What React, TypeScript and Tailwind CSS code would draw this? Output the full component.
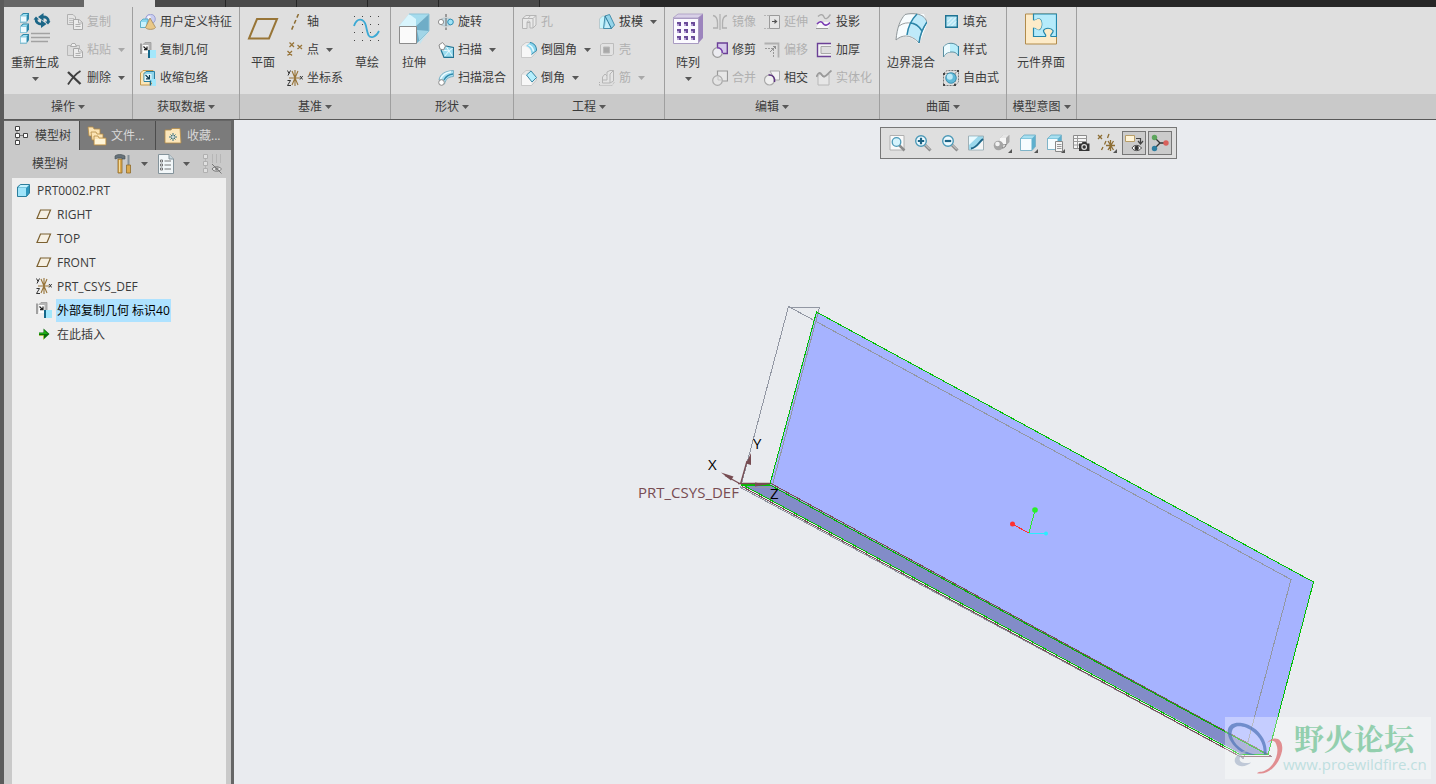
import React from "react";

type IconProps = { children: React.ReactNode; size?: "sm" | "lg" };

function Svg({ children, size = "sm" }: IconProps) {
  return size === "lg" ? (
    <svg viewBox="0 0 32 32" className="h-8 w-8 shrink-0" fill="none" aria-hidden="true">{children}</svg>
  ) : (
    <svg viewBox="0 0 16 16" className="h-4 w-4 shrink-0" fill="none" aria-hidden="true">{children}</svg>
  );
}

function Caret({ dim = false }: { dim?: boolean }) {
  return (
    <svg viewBox="0 0 7 4" className="h-1 w-[7px] shrink-0" aria-hidden="true">
      <path d="M0 0H7L3.5 4Z" fill={dim ? "#a8a8a8" : "#585858"} />
    </svg>
  );
}

function MiniCube({ y }: { y: number }) {
  return (
    <g transform={`translate(1 ${y})`}>
      <path d="M0 3L3 0H9V6L6.500 9.500H0Z" fill="#2d86a8" />
      <path d="M1 3L3.500 1H8L6 3Z" fill="#9be2f5" />
      <path d="M0.500 3H6.500V9H0.500Z" fill="#eefaff" stroke="#8fc9dc" />
    </g>
  );
}

const icons = {
  regen: (
    <Svg size="lg">
      <MiniCube y={0} />
      <MiniCube y={10.5} />
      <MiniCube y={21} />
      <path d="M23 4C27.500 3.500 29.500 5.500 29.500 9" stroke="#1c6687" strokeWidth="2.800" />
      <path d="M24.500 0V8L19 4Z" fill="#1c6687" />
      <path d="M26 8.500H31.500L29 11.500Z" fill="#1c6687" />
      <path d="M24 11C18.500 11.500 17 9 17 6" stroke="#1c6687" strokeWidth="2.800" />
      <path d="M22 7V15L27.500 11Z" fill="#1c6687" />
      <path d="M14.500 6.500H20L17 3.500Z" fill="#1c6687" />
      <path d="M12 20.500H31M12 24.500H31M12 28.500H29" stroke="#a2a2a2" strokeWidth="1.500" />
    </Svg>
  ),
  copy: (
    <Svg>
      <path d="M0.500 0.500H6L8.500 3V10.500H0.500Z" fill="#e4e4e4" stroke="#b0b0b0" />
      <path d="M2 4.500H7M2 6.500H6M2 8.500H6" stroke="#c0c0c0" />
      <path d="M6.500 5.500H12L15.500 8.500V15.500H6.500Z" fill="#ececec" stroke="#a8a8a8" />
      <path d="M11.500 5.500V9H15M8.500 10.500H13.500M8.500 12.500H13.500" stroke="#b0b0b0" />
    </Svg>
  ),
  paste: (
    <Svg>
      <path d="M0.500 3.500H12.500V13.500H0.500Z" fill="#dcdcdc" stroke="#b8b8b8" />
      <path d="M3.500 4.500L5 1.500H8L9.500 4.500Z" fill="#f0f0f0" stroke="#acacac" />
      <path d="M6.500 6.500H12L15.500 9.500V15.500H6.500Z" fill="#ececec" stroke="#a8a8a8" />
      <path d="M11.500 6.500V10H15M8.500 11.500H13.500M8.500 13.500H13.500" stroke="#b0b0b0" />
    </Svg>
  ),
  remove: (
    <Svg>
      <path d="M1 2L13.500 14" stroke="#3f3f3f" strokeWidth="2.400" />
      <path d="M13.500 1C8.500 4 4.500 9 1 14.500" stroke="#3f3f3f" strokeWidth="1.800" />
    </Svg>
  ),
  udf: (
    <Svg>
      <circle cx="10.500" cy="5" r="4.800" fill="#c9cdf0" stroke="#8f94cd" strokeWidth="0.800" />
      <circle cx="9" cy="3.500" r="1.800" fill="#f3f4ff" />
      <path d="M0.500 7.500L3 5H8V12L6.500 13.500H0.500Z" fill="#8ad8ef" stroke="#4ba3bf" strokeWidth="0.800" />
      <path d="M1 8H6V13H1Z" fill="#c9f2fd" />
      <path d="M10 4L15.500 13.500C14 16 7 16 5.500 13.500Z" fill="#e9c887" stroke="#a3885a" strokeWidth="0.800" />
    </Svg>
  ),
  copyGeom: (
    <Svg>
      <path d="M1 1.500V12" stroke="#555" />
      <path d="M3 2.500L5 0.500H11V8L8.500 10.500H3Z" fill="#b5b5b5" stroke="#999" strokeWidth="0.800" />
      <path d="M2.500 3H8.500V11H2.500Z" fill="#fdfdfd" />
      <path d="M3.500 4.500L6.500 7.500M7 4.500V7.700H4" stroke="#222" strokeWidth="1.200" />
      <path d="M8 8H10V16H8Z" fill="#15688a" />
      <path d="M10 8H16V16H10Z" fill="#a3e7fb" />
    </Svg>
  ),
  shrink: (
    <Svg>
      <path d="M0.500 3L3 0.500H13V12L10 15H0.500Z" fill="#fbe6b8" stroke="#c49a4d" />
      <path d="M4 3.500L6 1.500H14.500V9L12 11.500H4Z" fill="#8fd4ea" stroke="#2a7fa2" />
      <path d="M4.500 4H11.500V11H4.500Z" fill="#e2f8fe" />
      <path d="M5.500 5L9 8.500M9.500 5V8.800H6" stroke="#123d52" strokeWidth="1.200" />
      <path d="M10 9H16V16H12V12H10Z" fill="#a3e7fb" />
      <path d="M10.500 10.500V15.500" stroke="#15688a" strokeWidth="1.500" />
    </Svg>
  ),
  plane: (
    <Svg size="lg">
      <path d="M10 6H30L22 25.500H2Z" stroke="#987537" strokeWidth="2" />
    </Svg>
  ),
  axis: (
    <Svg>
      <path d="M11.500 0L4.500 16" stroke="#8d6d33" strokeWidth="1.500" strokeDasharray="4 2.500" />
    </Svg>
  ),
  point: (
    <Svg>
      <path d="M2.500 0.500L7 5M7 0.500L2.500 5M10.500 3L15 7M15 3L10.500 7M0.500 9L5 13.500M5 9L0.500 13.500" stroke="#98753a" strokeWidth="1.300" />
    </Svg>
  ),
  csys: (
    <Svg>
      <path d="M8 0V16M2 8H13M5 1L11 15M11 1L5 15" stroke="#98753a" strokeWidth="1.100" />
      <path d="M0.500 0.500L2 3.500M3.500 0.500L1 5.500M0.500 10.500H3.500L0.500 15.500H4M13 6L15.700 9.500M15.700 6L13 9.500" stroke="#333" />
    </Svg>
  ),
  sketch: (
    <Svg size="lg">
      <g fill="#444" shapeRendering="crispEdges">
        {[1, 9, 17, 25].map((x) =>
          [3, 11, 19, 27].map((y) => <rect key={`${x}-${y}`} x={x + 2} y={y} width="1" height="1" />)
        )}
      </g>
      <path d="M3 13C6 4 13 5 15 13C17 23 18 25 22 24C25 23 27 20 28 18" stroke="#3ba9d4" strokeWidth="1.800" />
    </Svg>
  ),
  extrude: (
    <Svg size="lg">
      <path d="M1 13L11 1H31L18 13Z" fill="#a5dcee" />
      <path d="M18 13L31 1V18L18 31Z" fill="#6fadc7" />
      <path d="M22 31L31 18L19 17Z" fill="#b6e6f5" opacity="0.700" />
      <path d="M1 13L11 1L18 6L18 13Z" fill="#d9f5fd" />
      <path d="M11 1H31V18L18 31" stroke="#8fc3d6" />
      <path d="M1.500 13.500H18.500V30.500H1.500Z" fill="#fafafa" stroke="#8b8b8b" />
    </Svg>
  ),
  revolve: (
    <Svg>
      <path d="M8 0V16" stroke="#555" strokeDasharray="3 1.500" />
      <path d="M3 5C6 3.500 10 3.500 13 5L13 11C10 12.500 6 12.500 3 11Z" fill="#c5dce5" stroke="#a9b9c0" strokeWidth="0.600" />
      <circle cx="3" cy="8" r="2.600" fill="#fff" stroke="#8f8f8f" />
      <circle cx="12.500" cy="8" r="2.800" fill="#9fe2f6" stroke="#2e8fb5" />
      <path d="M8 4V12" stroke="#666" />
    </Svg>
  ),
  sweep: (
    <Svg>
      <path d="M3 5L8 4L15.500 5.500V15H6L3 9Z" fill="#9bdcef" />
      <path d="M8 4L11 9L15.500 5.500M11 9L15 15M11 9L6 15M11 9L4 8" stroke="#e9faff" />
      <path d="M3 8L6 15.300H15.500V5.500L8 4" stroke="#227392" strokeWidth="1.200" />
      <path d="M1 3L4.500 0.500L7.500 4L5.500 8L2 7Z" fill="#fff" stroke="#8a8a8a" />
    </Svg>
  ),
  sweepBlend: (
    <Svg>
      <path d="M1 10C2 4 7 1 15.500 0.500V6.500C10 7 8 9 6.500 14Z" fill="#a9dff0" stroke="#6aa6bc" strokeWidth="0.800" />
      <path d="M2.500 9C4.500 4.500 8 2.500 13 1.800" stroke="#effbff" strokeWidth="1.500" />
      <path d="M6 10C8 6 10 4.500 15 4" stroke="#2f89ab" strokeWidth="1.300" />
      <circle cx="3.500" cy="12.500" r="2.800" fill="#fff" stroke="#8a8a8a" />
    </Svg>
  ),
  hole: (
    <Svg>
      <path d="M1.500 4.500L5 1.500H15V11L12 14H9V8.500H6V14.500H1.500Z" fill="#e9e9e9" stroke="#b5b5b5" />
      <path d="M1.500 4.500H12V14M12 4.500L15 1.500M6 8.500C6 6.500 9 6.500 9 8.500M7 4.500L9.500 1.500" stroke="#b5b5b5" />
    </Svg>
  ),
  round: (
    <Svg>
      <path d="M0.500 4L5 0.500H9C13 1 15.500 4 15.500 8.500V10L10.500 15.500H0.500Z" fill="#ededed" stroke="#bdbdbd" strokeWidth="0.700" />
      <path d="M5 4L9 0.500C13 1 15.500 4 15.500 8.500L10.500 12.500C10.500 8 8.500 5 5 4Z" fill="#8ad5ee" />
      <path d="M9 0.500C13 1 15.500 4 15.500 8.500L10.500 12.500" stroke="#2d86a8" />
      <path d="M7.500 3C10.500 4 12 6 12.500 9.500" stroke="#e6fbff" strokeWidth="1.600" />
      <path d="M1 4.500H4C8 5.500 10 8.500 10 12V15H1Z" fill="#f7f7f7" />
    </Svg>
  ),
  chamfer: (
    <Svg>
      <path d="M0.500 4.500L5 0.500H10L15.500 8V10L10.500 15.500H0.500Z" fill="#e6e6e6" stroke="#bdbdbd" strokeWidth="0.700" />
      <path d="M1 5H5L10.500 12V15H1Z" fill="#f7f7f7" />
      <path d="M5.500 5L10 1L15.500 7.500L11 12Z" fill="#b6effd" stroke="#3b8ba8" />
    </Svg>
  ),
  draft: (
    <Svg>
      <path d="M0.500 5L3.500 2H7V12L4 14.500H0.500Z" fill="#c9f4fc" stroke="#a5b5ba" strokeWidth="0.600" />
      <path d="M6 2L10.500 0.500L15.500 11L12.500 14.500H4.500Z" fill="#95d5ea" stroke="#3a86a4" strokeWidth="0.900" />
      <path d="M6 2L12.500 14.500" stroke="#2b7695" />
      <path d="M7.500 6L5.500 14H11Z" fill="#c5edf8" />
    </Svg>
  ),
  shell: (
    <Svg>
      <path d="M1.500 3L3 1.500H14.500V12L13 13.500H1.500Z" fill="#e2e2e2" stroke="#bdbdbd" />
      <path d="M4.500 5H10.500V11H4.500Z" fill="#a9a9a9" stroke="#b9b9b9" />
    </Svg>
  ),
  rib: (
    <Svg>
      <path d="M3.500 7L6 4L8 6V2L11 0.500H14.500V11L11 13H3.500Z" fill="#e4e4e4" stroke="#b5b5b5" />
      <path d="M11 4V13M8 6V10H4M11 4L14.500 0.500" stroke="#b5b5b5" />
      <path d="M0.500 15.500H13L15.500 12M0.500 15V11" stroke="#b0b0b0" strokeDasharray="1 1" />
    </Svg>
  ),
  pattern: (
    <Svg size="lg">
      <path d="M1 5L6 1H31L26 5Z" fill="#d8d0e7" stroke="#a99bc2" strokeWidth="0.800" />
      <path d="M26 5L31 1V25L26 30.500Z" fill="#9c84bd" />
      <path d="M1.500 5.500H26.500V30.500H1.500Z" fill="#fbfaff" stroke="#a99bc2" />
      <g fill="#6b4c9a" shapeRendering="crispEdges">
        {[5, 12, 19].map((x) =>
          [9, 16, 23].map((y) => <rect key={`${x}-${y}`} x={x} y={y} width="4" height="4" />)
        )}
      </g>
      <g fill="#b7a3d6" shapeRendering="crispEdges">
        {[5, 12, 19].map((x) =>
          [9, 16, 23].map((y) => <rect key={`${x}-${y}`} x={x} y={y + 2} width="2" height="2" />)
        )}
      </g>
    </Svg>
  ),
  mirror: (
    <Svg>
      <path d="M8 0V16" stroke="#a5a5a5" />
      <path d="M1 1.500C4 2 5.500 5 5.500 9V14H1M15 1.500C12 2 10.500 5 10.500 9V14H15" stroke="#b0b0b0" strokeWidth="1.300" />
    </Svg>
  ),
  trim: (
    <Svg>
      <path d="M5.500 1H15.300V11.500H10C9.500 8 8 6 5.500 5.500Z" fill="#d5c9ea" />
      <circle cx="5.500" cy="10.500" r="4.800" fill="#ebebf0" stroke="#999" strokeWidth="1.200" />
      <path d="M5.500 5V1H15.300V11.500H11" stroke="#6b4096" strokeWidth="1.400" />
      <path d="M5 5.700C8.500 5.500 10.500 8 10.300 11" stroke="#7a3cb3" strokeWidth="1.400" />
    </Svg>
  ),
  merge: (
    <Svg>
      <path d="M5.500 5V1H15.500V11H10.500" fill="#e7e7e7" stroke="#999" strokeWidth="1.200" />
      <circle cx="5.500" cy="10.500" r="4.800" fill="#e4e4e4" stroke="#aaa" strokeWidth="1.200" />
      <path d="M6 6.500V10H10" stroke="#c3c3c3" />
    </Svg>
  ),
  extend: (
    <Svg>
      <path d="M0 1.500H6M0 14.500H6" stroke="#b5b5b5" strokeDasharray="2 1" />
      <path d="M5.500 1.500H15.500V14.500H5.500Z" fill="#e6e6e6" stroke="#9b9b9b" />
      <path d="M8 7.500H11" stroke="#555" />
      <path d="M10.500 5L13.500 7.500L10.500 10Z" fill="#555" />
    </Svg>
  ),
  offset: (
    <Svg>
      <path d="M0.500 1.500H14.500V15.500" stroke="#b0b0b0" strokeWidth="1.800" />
      <path d="M1 6.500H9.500V15.500" stroke="#999" strokeDasharray="2 1" />
      <path d="M6 10L12 4M12 4.500H9M11.500 4V7" stroke="#8f8f8f" />
    </Svg>
  ),
  intersect: (
    <Svg>
      <path d="M6 1H15.500V10H11Z" fill="#f2f2f2" stroke="#aaa" />
      <circle cx="5.500" cy="10" r="5" fill="#f0f0f0" stroke="#a9a9a9" strokeWidth="1.200" />
      <path d="M4.500 5C9 4.500 11 7.500 10.500 12" stroke="#5e3580" strokeWidth="1.600" />
    </Svg>
  ),
  project: (
    <Svg>
      <path d="M2 2.500C5 -0.500 7 0.500 8 3C9 5.500 11 5.500 14.500 0.500" stroke="#a9a9a9" strokeWidth="1.400" />
      <path d="M0.500 14L3 8H15L12 14Z" fill="#f8f8f8" />
      <path d="M1 10C4 6.500 6 7.500 7.500 10C9 12 12 11 14 8.500" stroke="#7a3cb3" strokeWidth="1.600" />
      <path d="M0 14.500H12" stroke="#999" />
    </Svg>
  ),
  thicken: (
    <Svg>
      <path d="M15 1.500H1.500V14.500H15V11.500H5V4.500H15Z" fill="#f2f2f2" />
      <path d="M15 1.500H1.500V14.500H15" stroke="#6b4096" strokeWidth="1.400" />
      <path d="M15 4.500H5V11.500H15" stroke="#a9a9a9" />
    </Svg>
  ),
  solidify: (
    <Svg>
      <path d="M2 6V15H13V4C9 6 9 9 6 6C5 4 3 4 2 6Z" fill="#e6e6e6" stroke="#b8b8b8" />
      <path d="M0.500 7C2 2 4 2 6 5C8.500 9 11 4 15.500 0.500" stroke="#999" strokeWidth="1.700" />
    </Svg>
  ),
  boundary: (
    <Svg size="lg">
      <path d="M10 1H29L32 11L24 31C18 24 8 21 1 27C2 14 5 6 10 1Z" fill="#f7fcfe" />
      <path d="M22 1C27 1 31 5 32 9C28 16 25 22 24 30C20 25 17 23 12 22C13 14 16 7 22 1Z" fill="#bfeafa" />
      <path d="M10 1.500C5 7 2 15 1 27C9 20 18 23 24 30C25 22 28 15 32 9C30 4 27 2 22 1C18 0.500 14 0.500 10 1.500Z" stroke="#8f9699" />
      <path d="M4 13C12 7 22 10 27 18" stroke="#9aa0a2" />
      <path d="M22 1C16 7 13 14 12 22" stroke="#2b86aa" strokeWidth="1.500" />
      <path d="M32 9C28 15 25 22 24 30M15 10C20 10 24 13 27 18" stroke="#2b86aa" strokeWidth="1.500" />
    </Svg>
  ),
  fill: (
    <Svg>
      <path d="M2.700 1.700H14.300V13.300H2.700Z" fill="#b5e6f5" stroke="#1f7393" strokeWidth="1.400" />
      <path d="M4.500 8L9 3.500M4.500 12L13 3.500M8.500 12L13 7.500" stroke="#f3fcff" strokeWidth="0.900" />
    </Svg>
  ),
  style: (
    <Svg>
      <path d="M0.500 5C4 0 12 0 15.500 5V14C13 10 11 10 8 10C5 10 3 11 0.500 15Z" fill="#b9eefb" stroke="#5b8ea0" />
      <path d="M1 5C3 2.500 5 2 7 2V10C4 10 2.500 11 1 14Z" fill="#ecfbff" />
      <path d="M15.500 4V14" stroke="#3385a5" strokeWidth="1.200" />
    </Svg>
  ),
  freestyle: (
    <Svg>
      <path d="M0.500 3.500L4 0.500H15.500V12L12 15.500H0.500ZM0.500 3.500H12V15.500M12 3.500L15.500 0.500" stroke="#777" strokeDasharray="2 1" />
      <circle cx="8" cy="8" r="5.300" fill="#5fb9d8" stroke="#2c84a6" strokeWidth="0.800" />
      <circle cx="6.800" cy="6.800" r="3" fill="#bdeaf8" />
      <path d="M0 3H2V5H0ZM0 14H2V16H0ZM14 0H16V2H14ZM11 14H13V16H11Z" fill="#444" />
    </Svg>
  ),
  interfaceIcon: (
    <Svg size="lg">
      <path d="M0.500 1H31.500V31H0.500Z" fill="#fdebc8" stroke="#b18b4b" />
      <path d="M8.500 1H31.500V23.500H26C24.500 21.500 29 20 28 17.500C26 14.500 20 14.500 18.500 17.500C18 20 22 21.500 20.500 23.500H8.500V15C10.500 13.500 12 17.500 14.500 16.500C17.500 14.500 17.500 7.500 14.500 6C12 5 10.500 8.500 8.500 7Z" fill="#b5ebfb" stroke="#2386aa" strokeWidth="1.200" />
      <path d="M8.500 7C10.500 8.500 12 5 14.500 6C17.500 7.500 17.500 14.500 14.500 16.500C12 17.500 10.500 13.500 8.500 15Z" fill="#fdebc8" />
    </Svg>
  ),
  treePlane: (
    <Svg>
      <path d="M4.500 4H14.500L11 12.500H1Z" fill="#f6f0e3" stroke="#7b6030" strokeWidth="1.200" />
    </Svg>
  ),
  part: (
    <Svg>
      <path d="M1.500 5L4.500 2.500H13.500V11L10.500 14.500H1.500Z" fill="#2e97bd" stroke="#2b7d9c" />
      <path d="M2 5.500L4.500 3H13L10.500 5.500Z" fill="#c4f2fe" />
      <path d="M2 6H10V14H2Z" fill="#9fe4fa" />
    </Svg>
  ),
  insert: (
    <Svg>
      <path d="M3 6.500H7.500V2.500L13.500 8L7.500 13.500V9.500H3Z" fill="#0b6d0b" />
      <path d="M3 7H8V4L12 8H3Z" fill="#1fae12" />
      <path d="M3 9.500H7.500V13.500" stroke="#b8c832" strokeWidth="0.700" />
    </Svg>
  ),
};

type Cmd = { icon: React.ReactNode; label: string; menu?: boolean; off?: boolean };

function Big({ icon, label, menu, width }: Cmd & { width: string }) {
  return (
    <button type="button" className={`flex shrink-0 flex-col items-center pt-[5px] ${width}`}>
      {icon}
      <span className="mt-2 h-5 leading-5 whitespace-nowrap">{label}</span>
      {menu && <span className="flex h-3 items-center"><Caret /></span>}
    </button>
  );
}

function Col({ items, width }: { items: Cmd[]; width: string }) {
  return (
    <div className={`flex shrink-0 flex-col ${width}`}>
      {items.map((c) => (
        <button
          key={c.label}
          type="button"
          disabled={c.off}
          className={`flex h-7 items-center gap-1 whitespace-nowrap ${c.off ? "text-[#b0b0b0]" : ""}`}
        >
          {c.icon}
          <span>{c.label}</span>
          {c.menu && <span className="ml-[3px] flex"><Caret dim={c.off} /></span>}
        </button>
      ))}
    </div>
  );
}

function Group({ title, width, children }: { title: string; width: string; children: React.ReactNode }) {
  return (
    <section aria-label={title} className={`flex shrink-0 flex-col border-r border-[#9f9f9f] ${width}`}>
      <div className="flex h-[87px] pt-px">{children}</div>
      <button type="button" className="flex h-[25px] w-full items-center justify-center gap-[3px] bg-[#c9c9c9] whitespace-nowrap">
        {title}
        <Caret />
      </button>
    </section>
  );
}

function MenuStrip() {
  return (
    <div className="flex h-[7px] bg-[#272727]">
      <div className="w-20 bg-[#666666]" />
      <div className="w-[71px] bg-[#dfdfdf]" />
      <div className="w-[71px] border-r border-[#262626] bg-[#4a4a4a]" />
      <div className="w-[71px] border-r border-[#262626] bg-[#4a4a4a]" />
      <div className="w-[71px] border-r border-[#262626] bg-[#4a4a4a]" />
      <div className="w-[71px] border-r border-[#262626] bg-[#4a4a4a]" />
      <div className="w-[101px] border-r border-[#262626] bg-[#4a4a4a]" />
      <div className="w-[100px] bg-[#4a4a4a]" />
    </div>
  );
}

function Ribbon() {
  return (
    <div className="flex border-b border-[#585858] bg-[#dfdfdf]">
      <Group title="操作" width="w-[129px]">
        <Big icon={icons.regen} label="重新生成" menu width="w-[62px]" />
        <Col width="ml-px w-16" items={[
          { icon: icons.copy, label: "复制", off: true },
          { icon: icons.paste, label: "粘贴", off: true, menu: true },
          { icon: icons.remove, label: "删除", menu: true },
        ]} />
      </Group>
      <Group title="获取数据" width="w-[107px]">
        <Col width="ml-[7px]" items={[
          { icon: icons.udf, label: "用户定义特征" },
          { icon: icons.copyGeom, label: "复制几何" },
          { icon: icons.shrink, label: "收缩包络" },
        ]} />
      </Group>
      <Group title="基准" width="w-[151px]">
        <Big icon={icons.plane} label="平面" width="w-[46px]" />
        <Col width="ml-px w-[56px]" items={[
          { icon: icons.axis, label: "轴" },
          { icon: icons.point, label: "点", menu: true },
          { icon: icons.csys, label: "坐标系" },
        ]} />
        <Big icon={icons.sketch} label="草绘" width="w-12" />
      </Group>
      <Group title="形状" width="w-[123px]">
        <Big icon={icons.extrude} label="拉伸" width="w-[46px]" />
        <Col width="ml-px" items={[
          { icon: icons.revolve, label: "旋转" },
          { icon: icons.sweep, label: "扫描", menu: true },
          { icon: icons.sweepBlend, label: "扫描混合" },
        ]} />
      </Group>
      <Group title="工程" width="w-[151px]">
        <Col width="ml-[7px] w-[78px]" items={[
          { icon: icons.hole, label: "孔", off: true },
          { icon: icons.round, label: "倒圆角", menu: true },
          { icon: icons.chamfer, label: "倒角", menu: true },
        ]} />
        <Col width="" items={[
          { icon: icons.draft, label: "拔模", menu: true },
          { icon: icons.shell, label: "壳", off: true },
          { icon: icons.rib, label: "筋", off: true, menu: true },
        ]} />
      </Group>
      <Group title="编辑" width="w-[215px]">
        <Big icon={icons.pattern} label="阵列" menu width="w-[46px]" />
        <Col width="ml-px w-[52px]" items={[
          { icon: icons.mirror, label: "镜像", off: true },
          { icon: icons.trim, label: "修剪" },
          { icon: icons.merge, label: "合并", off: true },
        ]} />
        <Col width="w-[52px]" items={[
          { icon: icons.extend, label: "延伸", off: true },
          { icon: icons.offset, label: "偏移", off: true },
          { icon: icons.intersect, label: "相交" },
        ]} />
        <Col width="" items={[
          { icon: icons.project, label: "投影" },
          { icon: icons.thicken, label: "加厚" },
          { icon: icons.solidify, label: "实体化", off: true },
        ]} />
      </Group>
      <Group title="曲面" width="w-[127px]">
        <Big icon={icons.boundary} label="边界混合" width="w-[62px]" />
        <Col width="ml-px" items={[
          { icon: icons.fill, label: "填充" },
          { icon: icons.style, label: "样式" },
          { icon: icons.freestyle, label: "自由式" },
        ]} />
      </Group>
      <Group title="模型意图" width="w-[70px]">
        <Big icon={icons.interfaceIcon} label="元件界面" width="w-[68px]" />
      </Group>
      <div className="flex flex-1 flex-col justify-end">
        <div className="h-[25px] bg-[#c9c9c9]" />
      </div>
    </div>
  );
}

function FolderTab({ label, children }: { label: string; children: React.ReactNode }) {
  return (
    <button type="button" role="tab" className="flex h-full flex-1 items-center gap-1 border-l border-[#4c4c4c] bg-[#7b7b7b] pl-[7px] whitespace-nowrap text-[#d8d8d8]">
      {children}
      {label}
    </button>
  );
}

const treeRows = [
  { icon: icons.treePlane, label: "RIGHT" },
  { icon: icons.treePlane, label: "TOP" },
  { icon: icons.treePlane, label: "FRONT" },
  { icon: icons.csys, label: "PRT_CSYS_DEF" },
  { icon: icons.copyGeom, label: "外部复制几何 标识40", selected: true },
  { icon: icons.insert, label: "在此插入" },
];

function Sidebar() {
  return (
    <aside className="flex w-[230px] shrink-0 flex-col border-t border-r-[3px] border-[#666666] bg-[#c9c9c9]">
      <div role="tablist" className="flex h-[29px]">
        <button type="button" role="tab" aria-selected="true" className="flex h-full w-[75px] items-center gap-[5px] pl-[10px] whitespace-nowrap">
          <svg viewBox="0 0 16 20" className="h-5 w-4" fill="none" aria-hidden="true">
            <path d="M3 5V15M5 9.500H9" stroke="#777" />
            <path d="M1.500 0.500H5.500V4.500H1.500ZM1.500 7.500H5.500V11.500H1.500ZM1.500 14.500H5.500V18.500H1.500ZM9.500 7.500H13.500V11.500H9.500Z" fill="#fff" stroke="#444" />
          </svg>
          模型树
        </button>
        <FolderTab label="文件...">
          <svg viewBox="0 0 20 20" className="h-5 w-5" aria-hidden="true">
            <g fill="#fbe3b3" stroke="#b58b45" strokeWidth="0.800">
              <path d="M1 1H6L7 3H13V10H2Z" />
              <path d="M4 6H9L10 8H16V14H5Z" />
              <path d="M7 10H11L12 12H19V19H7Z" />
            </g>
            <path d="M8 13H18V18H8Z" fill="#fff4d6" />
          </svg>
        </FolderTab>
        <FolderTab label="收藏...">
          <svg viewBox="0 0 20 20" className="h-5 w-5" aria-hidden="true">
            <path d="M2 4H8L9 2.500H17L18 17H2Z" fill="#fbe6bb" stroke="#b58b45" strokeWidth="0.800" />
            <path d="M10 7V15M6 11H14M7.500 8.500L12.500 13.500M12.500 8.500L7.500 13.500" stroke="#1f6280" strokeWidth="0.900" />
            <circle cx="10" cy="11" r="1" fill="#fff" />
          </svg>
        </FolderTab>
      </div>
      <div className="flex h-7 items-center pr-[9px] pl-7">
        <h2 className="flex-1">模型树</h2>
        <button type="button" aria-label="设置" className="flex items-center gap-2">
          <svg viewBox="0 0 20 20" className="h-5 w-5" aria-hidden="true">
            <path d="M5 5H9V19H5Z" fill="#dba94e" stroke="#8f6b2a" strokeWidth="0.800" />
            <path d="M6.500 6V18" stroke="#f6dc9b" />
            <path d="M2 2C4 0 9 0 12 2V5H9V4H5L2 5Z" fill="#66727a" stroke="#454d52" strokeWidth="0.600" />
            <path d="M14.500 1H16.500V11H14.500Z" fill="#87929a" />
            <path d="M13.500 11H17.500V19H13.500Z" fill="#dba94e" stroke="#8f6b2a" strokeWidth="0.800" />
          </svg>
          <Caret />
        </button>
        <button type="button" aria-label="显示" className="ml-2 flex items-center gap-[7px]">
          <svg viewBox="0 0 20 20" className="h-5 w-5" fill="none" aria-hidden="true">
            <path d="M2.500 0.500H13L17.500 5V19.500H2.500Z" fill="#f2f7f9" stroke="#84939b" />
            <path d="M13 0.500V5H17.500" fill="#c5d4db" stroke="#84939b" />
            <path d="M8.500 7H15M8.500 11H15M8.500 15H15" stroke="#777" />
            <path d="M4.500 6H6.500V8H4.500ZM4.500 10H6.500V12H4.500ZM4.500 14H6.500V16H4.500Z" fill="#fff" stroke="#555" strokeWidth="0.800" />
          </svg>
          <Caret />
        </button>
        <button type="button" aria-label="隐藏项" disabled className="ml-3">
          <svg viewBox="0 0 20 20" className="h-5 w-5" fill="none" aria-hidden="true">
            <path d="M3.500 5V15M10.500 0V9M14.500 0V9M18.500 0V9" stroke="#b6b6b6" />
            <path d="M1.500 0.500H5.500V4.500H1.500ZM1.500 7.500H5.500V11.500H1.500ZM1.500 14.500H5.500V18.500H1.500Z" fill="#e0e0e0" stroke="#b0b0b0" />
            <path d="M10 15C12 12 17 12 19.500 15C17 18 12 18 10 15Z" fill="#e8e8e8" stroke="#777" />
            <circle cx="14.800" cy="15" r="1.800" fill="#888" />
            <path d="M10 10L19.500 19.500" stroke="#777" />
          </svg>
        </button>
      </div>
      <ul className="mr-[5px] ml-2 flex-1 bg-[#eeeeee]">
        <li>
          <div className="flex h-6 items-center pl-1">{icons.part}<span className="ml-[5px] leading-[23px]">PRT0002.PRT</span></div>
          <ul>
            {treeRows.map((r) => (
              <li key={r.label} className="flex h-6 items-center gap-1 pl-6">
                {r.icon}
                <span className={r.selected ? "bg-[#aee2ff] px-px leading-[23px] text-black" : "px-px leading-[23px]"}>{r.label}</span>
              </li>
            ))}
          </ul>
        </li>
      </ul>
    </aside>
  );
}

function ToolButton({ label, active = false, menu = false, children }: { label: string; active?: boolean; menu?: boolean; children: React.ReactNode }) {
  return (
    <button
      type="button"
      aria-label={label}
      aria-pressed={active}
      className={`mx-px flex h-6 w-6 items-center justify-center border ${active ? "border-[#777777] bg-[#cbcbcb]" : "border-transparent"}`}
    >
      <svg viewBox="0 0 20 20" className="h-5 w-5 shrink-0" fill="none" aria-hidden="true">
        {children}
        {menu && <path d="M20 16V20H16Z" fill="#555" />}
      </svg>
    </button>
  );
}

function Lens({ sign }: { sign: string }) {
  return (
    <>
      <path d="M12 12L17.500 17.500" stroke="#8c8c8c" strokeWidth="3" />
      <path d="M12.500 12L17 16.500" stroke="#ddd" />
      <circle cx="8" cy="8" r="5.300" fill="#eefaff" stroke="#4c99b7" strokeWidth="1.400" />
      <path d={sign} stroke="#1d6485" strokeWidth="2.200" />
    </>
  );
}

function ViewToolbar() {
  return (
    <div role="toolbar" aria-label="视图" className="absolute top-[7px] right-[259px] flex w-[297px] items-center justify-between border border-[#777777] bg-[#dfdfdf] p-[3px]">
      <ToolButton label="重新调整">
        <path d="M3 2.500H17V17H3Z" fill="#fafafa" stroke="#b0b0b0" />
        <path d="M12 12L17.500 17.500" stroke="#8c8c8c" strokeWidth="2.500" />
        <circle cx="9.500" cy="9" r="4.300" fill="#d5f3fc" stroke="#4c99b7" strokeWidth="1.300" />
      </ToolButton>
      <ToolButton label="放大"><Lens sign="M4.800 8H11.200M8 4.800V11.200" /></ToolButton>
      <ToolButton label="缩小"><Lens sign="M4.800 8H11.200" /></ToolButton>
      <ToolButton label="重画">
        <path d="M2.500 3H17.500V17H2.500Z" fill="#9bd8ec" stroke="#a0b0b6" />
        <path d="M3 3.500H12L3 12Z" fill="#eafaff" />
        <path d="M5 16.500C11 15 14 12 17 6V16.500Z" fill="#f6f6f6" />
        <path d="M5 15.500C11 14.500 12 10 17 6" stroke="#1d6485" strokeWidth="1.800" />
      </ToolButton>
      <ToolButton label="显示样式" menu>
        <path d="M8 5L11 2H17.500V9L14.500 12H8Z" fill="#a9a9a9" />
        <path d="M8 5L11 2H17L14 5Z" fill="#e6e6e6" />
        <path d="M8 5H14V11H8Z" fill="#f6f6f6" />
        <circle cx="6.500" cy="12.500" r="4.800" fill="#a5a5a5" />
        <circle cx="5.500" cy="11" r="2.300" fill="#f2f2f2" />
        <path d="M10 15C12 15 14 14 14 11" stroke="#777" />
      </ToolButton>
      <ToolButton label="已保存方向" menu>
        <path d="M2.500 5.500L6 2H17.500V13.500L14 17.500H2.500Z" fill="#5fb0ce" stroke="#7fb4c8" />
        <path d="M3 5.500L6 2.500H17L14 5.500Z" fill="#a8dff0" />
        <path d="M3 6H13.500V17H3Z" fill="#f6fcfe" />
      </ToolButton>
      <ToolButton label="视图管理器" menu>
        <path d="M2.500 5.500L6 2H16.500V13.500L14 16.500H2.500Z" fill="#5fb0ce" stroke="#7fb4c8" />
        <path d="M3 5.500L6 2.500H16L13 5.500Z" fill="#a8dff0" />
        <path d="M3 6H12.500V16H3Z" fill="#f6fcfe" />
        <path d="M10.500 8.500H17.500V18.500H10.500Z" fill="#f5f5f5" stroke="#888" />
        <path d="M12 11.500H16.500M12 13.500H16.500M12 15.500H16.500" stroke="#999" />
      </ToolButton>
      <ToolButton label="快照">
        <path d="M2.500 2.500H15.500V15.500H2.500Z" fill="#f6f6f6" stroke="#8b8b8b" />
        <path d="M2.500 5.500H15.500M2.500 8.500H15.500M2.500 12H10M6.500 3V15" stroke="#9b9b9b" />
        <path d="M8 10.500H10.500L11.500 9H15L16 10.500H18.500V18H8Z" fill="#333" />
        <circle cx="13.200" cy="14" r="2.300" fill="#333" stroke="#ddd" strokeWidth="1.200" />
      </ToolButton>
      <ToolButton label="基准显示" menu>
        <path d="M1 2L5 6M5 2L1 6M12 1L10.500 5M9 8L7.500 11.500M6 14L4.500 17M13.500 7V18M9 12.500H18M11 8L16.500 17M16.500 8L11 17" stroke="#8d6d33" strokeWidth="1.300" />
      </ToolButton>
      <ToolButton label="注释显示" active>
        <path d="M1.500 2.500H10.500V8.500H1.500Z" fill="#fff4d8" stroke="#b89e68" />
        <path d="M12 5.500H16.500V10M14 8L16.500 11L19 8" stroke="#444" strokeWidth="1.200" />
        <path d="M8 15C10 11.500 15 11.500 17.500 15C15 18.500 10 18.500 8 15Z" fill="#fff" stroke="#444" />
        <circle cx="12.700" cy="15" r="2.200" fill="#333" />
      </ToolButton>
      <ToolButton label="旋转中心" active>
        <path d="M5 5L10 10L4.500 15.500M10 10H16" stroke="#333" strokeWidth="1.300" />
        <circle cx="4.500" cy="4.500" r="2.700" fill="#5da55d" />
        <circle cx="16" cy="10" r="2.700" fill="#d9605a" />
        <circle cx="4.500" cy="15.500" r="2.700" fill="#2f7ea0" />
      </ToolButton>
    </div>
  );
}

function Model() {
  return (
    <svg viewBox="234 120 1202 664" className="absolute inset-0 h-full w-full" fill="none" role="img" aria-label="PRT0002">
      <path d="M816 312L1313.500 582L1268 754L770 484Z" fill="#a6b3ff" />
      <path d="M742 485L770 484L1268 754H1241Z" fill="#828cc8" />
      <g shapeRendering="crispEdges">
        <path d="M788.500 306.500L1291 579.500L1243.500 758.500L740.500 487.500ZM788.500 307.500H819.500L772 486.500M740.500 487.500H772" stroke="#9297a3" />
        <path d="M742 486.500L1240 756.500H1272L771 483.500" stroke="#7a5158" />
        <path d="M816.500 312L1313.500 582L1268 754.500H1240L742 484.500L770 484Z" stroke="#00c000" />
        <path d="M770 485L1268 755" stroke="#00b400" />
        <path d="M741 485.500H770" stroke="#00c000" />
      </g>
      <path d="M740.500 484L747 461M740.500 484L725 475.500M738 483.500H770" stroke="#774c52" strokeWidth="1.300" />
      <path d="M751 453V465L746 463.500ZM721 472.500L733.500 476.500L731 480.500ZM768 484.500L755 482.500V486.500Z" fill="#774c52" />
      <g className="font-['Open_Sans',sans-serif] text-[15px]">
        <text x="638" y="498" fill="#774c52">PRT_CSYS_DEF</text>
        <text x="708" y="470" fill="#000">X</text>
        <text x="753" y="449" fill="#000">Y</text>
        <text x="770" y="499" fill="#000">Z</text>
      </g>
      <g shapeRendering="crispEdges">
        <path d="M1029 533L1012 524" stroke="#ff3030" />
        <path d="M1029 533L1035 510" stroke="#28ee28" />
        <path d="M1029 533H1046V534H1029Z" fill="#28eeff" />
      </g>
      <circle cx="1012.500" cy="524" r="2.500" fill="#ff3030" />
      <circle cx="1035" cy="510" r="2.800" fill="#28f028" />
      <circle cx="1046" cy="533.500" r="2" fill="#28eeff" />
    </svg>
  );
}

function Watermark() {
  return (
    <div className="absolute right-[5px] bottom-[5px] flex h-[62px] w-[206px] items-center bg-white/35">
      <svg viewBox="0 0 60 62" className="h-[62px] w-[58px] shrink-0" fill="none" aria-hidden="true">
        <path d="M43 38C45 22 32 7 16 5C2 4 0 14 6 24C12 34 22 39 32 38C18 35 9 27 7 18C6 8 14 7 22 10C34 15 41 26 40 38Z" fill="#4c72b6" fillOpacity="0.700" />
        <path d="M43 26C51 17 61 21 59 34C56 49 44 60 33 57C35 55 37 56 40 55C51 51 57 36 53 27C51 22 47 23 43 26Z" fill="#dd7478" fillOpacity="0.800" />
        <path d="M28 32C12 34 5 45 14 49C18 51 24 49 27 46C18 48 13 45 16 40C19 36 23 34 28 32Z" fill="#a9b6ca" fillOpacity="0.700" />
      </svg>
      <div className="flex flex-1 flex-col">
        <span className="pl-[11px] font-['Noto_Serif_CJK_SC','Noto_Sans_CJK_SC',sans-serif] text-[30px] leading-[32px] font-bold whitespace-nowrap text-[#93cfae]">野火论坛</span>
        <span className="font-['Open_Sans',sans-serif] text-[15px] leading-[22px] whitespace-nowrap text-[#bfdfe0]">www.proewildfire.cn</span>
      </div>
    </div>
  );
}

export default function App() {
  return (
    <div className="flex min-h-screen flex-col overflow-hidden border-l-4 border-[#5b5b5b] bg-[#e9ebef] font-['Open_Sans','Noto_Sans_CJK_SC',sans-serif] text-xs text-[#3b3b3b]">
      <header>
        <MenuStrip />
        <Ribbon />
      </header>
      <div className="flex flex-1">
        <Sidebar />
        <main className="relative flex-1">
          <Model />
          <ViewToolbar />
          <Watermark />
        </main>
      </div>
    </div>
  );
}
